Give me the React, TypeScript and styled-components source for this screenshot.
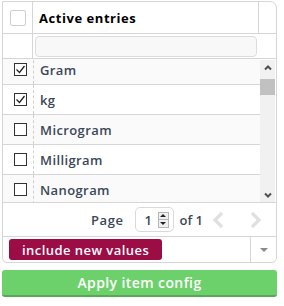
import React from "react";
import styled, { createGlobalStyle } from "styled-components";

const Global = createGlobalStyle`
  html, body { margin: 0; padding: 0; background: #fff; }
  body { font-family: "Open Sans", "Liberation Sans", sans-serif; }
  * { box-sizing: border-box; }
`;

const Page = styled.div`
  width: 275px;
  margin: 1px 0 0 2px;
  display: flex;
  flex-direction: column;
  gap: 7px;
`;

const Panel = styled.div`
  border: 1px solid #d6d6d6;
  border-radius: 0 7px 5px 5px;
  display: flex;
  flex-direction: column;
  overflow: hidden;
`;

const HeaderRow = styled.div`
  display: grid;
  grid-template-columns: 30px 1fr 17px;
  height: 32px;
  border-bottom: 1px solid #d6d6d6;
`;

const HeaderCell = styled.div<{ $line?: boolean; $center?: boolean }>`
  display: flex;
  align-items: center;
  justify-content: ${(p) => (p.$center ? "center" : "flex-start")};
  padding-left: ${(p) => (p.$center ? "0" : "6px")};
  border-right: ${(p) => (p.$line ? "1px solid #d6d6d6" : "none")};
  font-weight: 700;
  font-size: 13px;
  letter-spacing: 0.55px;
  color: #000;
`;

const HeaderBox = styled.span`
  width: 16px;
  height: 16px;
  border: 1px solid #cfcfcf;
  border-radius: 2px;
  background: #fff;
`;

const FilterRow = styled.div`
  display: grid;
  grid-template-columns: 30px 1fr 17px;
  height: 25px;
  border-bottom: 1px solid #d6d6d6;
`;

const FilterSpacer = styled.div<{ $line?: boolean }>`
  border-right: ${(p) => (p.$line ? "1px solid #d6d6d6" : "none")};
`;

const FilterCell = styled.div`
  display: flex;
`;

const FilterInput = styled.input`
  margin: 2px 2px 0 2px;
  height: 21px;
  width: 100%;
  border: 1px solid #dcdcdc;
  border-radius: 4px;
  background: #f8f8f8;
  outline: none;
`;

const ListArea = styled.div`
  display: grid;
  grid-template-columns: 1fr 15px;
  height: 143px;
  margin-right: 1px;
`;

const Rows = styled.div`
  overflow: hidden;
`;

const Scrollbar = styled.div`
  display: flex;
  flex-direction: column;
  background: #f1f1f1;
  margin-top: 1px;
`;

const ScrollButton = styled.div`
  height: 15px;
  display: flex;
  align-items: center;
  justify-content: center;
`;

const Track = styled.div`
  flex: 1;
  padding-top: 4px;
`;

const Thumb = styled.div`
  height: 16px;
  background: #c1c1c1;
`;

const Row = styled.div<{ $odd: boolean; $first?: boolean }>`
  display: grid;
  grid-template-columns: 31px 1fr;
  height: 30px;
  margin-top: ${(p) => (p.$first ? "-4px" : "0")};
  background: ${(p) => (p.$odd ? "#fafafa" : "#fff")};
  border-bottom: 1px solid #d6d6d6;
`;

const CheckCell = styled.div`
  display: flex;
  align-items: center;
  justify-content: center;
  padding-left: 4px;
  border-right: 1px dashed #cfcfcf;
`;

const Box = styled.span`
  width: 13px;
  height: 13px;
  border: 1px solid #333;
  display: flex;
  align-items: center;
  justify-content: center;
  background: #fff;
`;

const Label = styled.div`
  display: flex;
  align-items: center;
  padding-left: 6px;
  font-size: 13px;
  font-weight: 600;
  letter-spacing: 0.4px;
  color: #3b4858;
`;

const Pager = styled.div`
  display: flex;
  align-items: center;
  justify-content: flex-end;
  height: 35px;
  padding-right: 13px;
  border-top: 1px solid #d6d6d6;
  border-bottom: 1px solid #d6d6d6;
  font-size: 13px;
  font-weight: 600;
  letter-spacing: 0.3px;
  color: #3b4858;
`;

const PageLabel = styled.span`
  margin-right: 11px;
  letter-spacing: 0.6px;
`;

const SpinWrap = styled.div`
  width: 39px;
  height: 25px;
  border: 1px solid #d9d9d9;
  border-radius: 5px;
  display: flex;
  align-items: center;
  justify-content: space-between;
  padding: 0 4px 0 9px;
  margin-right: 6px;
`;

const SpinValue = styled.span`
  font-size: 13px;
  font-weight: 600;
  color: #3b4858;
`;

const SpinButtons = styled.div`
  width: 11px;
  height: 16px;
  display: flex;
  flex-direction: column;
  border: 1px solid #b5b5b5;
  background: #f0f0f0;
`;

const SpinHalf = styled.div<{ $down?: boolean }>`
  flex: 1;
  display: flex;
  align-items: center;
  justify-content: center;
  border-top: ${(p) => (p.$down ? "1px solid #b5b5b5" : "none")};
  &::after {
    content: "";
    border-left: 3px solid transparent;
    border-right: 3px solid transparent;
    ${(p) =>
      p.$down ? "border-top: 3px solid #222;" : "border-bottom: 3px solid #222;"}
  }
`;

const OfLabel = styled.span`
  margin-right: 8px;
  letter-spacing: 0;
`;

const Arrow = styled.svg`
  width: 16px;
  height: 18px;
`;

const ArrowGap = styled.span`
  width: 20px;
`;

const SelectRow = styled.div`
  display: grid;
  grid-template-columns: 1fr 25px;
  height: 25px;
`;

const TagArea = styled.div`
  display: flex;
  align-items: center;
  padding-left: 6px;
  border-right: 1px solid #d6d6d6;
`;

const Tag = styled.span`
  background: #9c0c45;
  color: #fff;
  border-radius: 3px;
  height: 21px;
  padding: 0 13px;
  display: flex;
  align-items: center;
  font-size: 13px;
  font-weight: 600;
  letter-spacing: 0.45px;
`;

const Caret = styled.div`
  display: flex;
  align-items: center;
  justify-content: center;
  &::after {
    content: "";
    border-left: 4px solid transparent;
    border-right: 4px solid transparent;
    border-top: 4px solid #8a8a8a;
  }
`;

const ApplyButton = styled.button`
  height: 27px;
  width: 100%;
  border: none;
  border-bottom: 2px solid #57a957;
  border-radius: 3px;
  background: #6dd16b;
  color: #fff;
  font-family: inherit;
  font-size: 14px;
  font-weight: 600;
  letter-spacing: 0.4px;
  padding: 0;
`;

const Check = () => (
  <svg width="11" height="11" viewBox="0 0 11 11">
    <polyline points="1.5,5.5 4.5,8.5 9.5,2" fill="none" stroke="#222" strokeWidth="1.3" />
  </svg>
);

const ScrollArrow = ({ down }: { down?: boolean }) => (
  <svg width="8" height="6" viewBox="0 0 8 6">
    <polyline
      points={down ? "1,1.5 4,4.5 7,1.5" : "1,4.5 4,1.5 7,4.5"}
      fill="none"
      stroke="#505050"
      strokeWidth="2"
      strokeLinejoin="miter"
    />
  </svg>
);

const units = ["Gram", "kg", "Microgram", "Milligram", "Nanogram"];
const checked = new Set(["Gram", "kg"]);

export default function App() {
  return (
    <>
      <Global />
      <Page>
        <Panel>
          <HeaderRow>
            <HeaderCell $line $center>
              <HeaderBox />
            </HeaderCell>
            <HeaderCell $line>Active entries</HeaderCell>
            <HeaderCell />
          </HeaderRow>
          <FilterRow>
            <FilterSpacer $line />
            <FilterCell>
              <FilterInput />
            </FilterCell>
            <FilterSpacer />
          </FilterRow>
          <ListArea>
            <Rows>
              {units.map((u, i) => (
                <Row key={u} $odd={i % 2 === 0} $first={i === 0}>
                  <CheckCell>
                    <Box>{checked.has(u) && <Check />}</Box>
                  </CheckCell>
                  <Label>{u}</Label>
                </Row>
              ))}
            </Rows>
            <Scrollbar>
              <ScrollButton>
                <ScrollArrow />
              </ScrollButton>
              <Track>
                <Thumb />
              </Track>
              <ScrollButton>
                <ScrollArrow down />
              </ScrollButton>
            </Scrollbar>
          </ListArea>
          <Pager>
            <PageLabel>Page</PageLabel>
            <SpinWrap>
              <SpinValue>1</SpinValue>
              <SpinButtons>
                <SpinHalf />
                <SpinHalf $down />
              </SpinButtons>
            </SpinWrap>
            <OfLabel>of 1</OfLabel>
            <Arrow viewBox="0 0 16 18">
              <polyline points="11,2 4,9 11,16" fill="none" stroke="#e0e0e0" strokeWidth="3.2" />
            </Arrow>
            <ArrowGap />
            <Arrow viewBox="0 0 16 18">
              <polyline points="5,2 12,9 5,16" fill="none" stroke="#e0e0e0" strokeWidth="3.2" />
            </Arrow>
          </Pager>
          <SelectRow>
            <TagArea>
              <Tag>include new values</Tag>
            </TagArea>
            <Caret />
          </SelectRow>
        </Panel>
        <ApplyButton>Apply item config</ApplyButton>
      </Page>
    </>
  );
}
